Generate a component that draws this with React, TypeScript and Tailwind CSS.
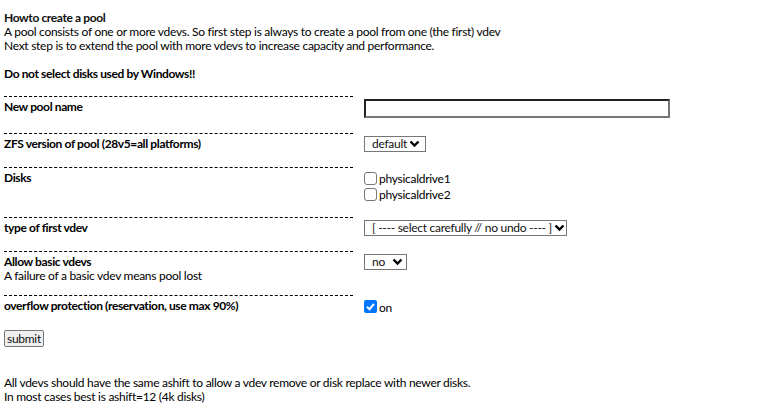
import React from "react";

function Chevron() {
  return (
    <svg width="11" height="8" viewBox="0 0 11 8" className="shrink-0">
      <path d="M1.5 1.5 L5.5 5.5 L9.5 1.5" fill="none" stroke="#000" strokeWidth="2.4" />
    </svg>
  );
}

function FakeSelect({ label, width, pr }: { label: string; width: string; pr: string }) {
  return (
    <div className={`flex h-[16px] items-center border border-[#767676] bg-white pl-[7px] ${pr} ${width}`}>
      <span className="whitespace-nowrap leading-[14px] text-[#111]">{label}</span>
      <span className="ml-auto">
        <Chevron />
      </span>
    </div>
  );
}

function Box({ checked, label }: { checked?: boolean; label: string }) {
  return (
    <label className="flex h-[16.5px] items-center">
      {checked ? (
        <span className="flex h-[13px] w-[13px] items-center justify-center rounded-[2px] bg-[#0075ff]">
          <svg width="11" height="11" viewBox="0 0 11 11">
            <path d="M2 5.8 L4.5 8.2 L9 2.8" fill="none" stroke="#fff" strokeWidth="2" />
          </svg>
        </span>
      ) : (
        <span className="h-[13px] w-[13px] rounded-[3px] border border-[#767676] bg-white" />
      )}
      <span className={`ml-[2px] leading-[14px] ${checked ? "mt-[4px]" : "mt-[1px]"}`}>{label}</span>
    </label>
  );
}

function Row({
  height,
  left,
  right,
}: {
  height: string;
  left: React.ReactNode;
  right: React.ReactNode;
}) {
  return (
    <div className={`flex ${height}`}>
      <div className="w-[349px] shrink-0 border-t border-dashed border-black pt-[3px]">{left}</div>
      <div className="ml-[11px] pt-[3px]">{right}</div>
    </div>
  );
}

export default function App() {
  return (
    <div className="min-h-screen bg-white pl-[4px] pt-[11px] font-['Lato',sans-serif] text-[12px] leading-[14px] tracking-[-0.28px] text-black">
      {/* Intro */}
      <p className="font-bold tracking-[-0.38px] text-[#111]">Howto create a pool</p>
      <p>A pool consists of one or more vdevs. So first step is always to create a pool from one (the first) vdev</p>
      <p>Next step is to extend the pool with more vdevs to increase capacity and performance.</p>
      <p className="mt-[14px] font-bold tracking-[-0.38px]">Do not select disks used by Windows!!</p>

      {/* Form */}
      <div className="mt-[15px]">
        <Row
          height="h-[37px]"
          left={<p className="font-bold tracking-[-0.38px]">New pool name</p>}
          right={
            <input
              type="text"
              className="h-[19px] w-[306px] border-2 border-t-[#222] border-l-[#222] border-b-[#777] border-r-[#777] bg-white outline-none"
            />
          }
        />
        <Row
          height="h-[34px]"
          left={<p className="font-bold tracking-[-0.38px]">ZFS version of pool (28v5=all platforms)</p>}
          right={<FakeSelect label="default" width="w-[62px]" pr="pr-[5px]" />}
        />
        <Row
          height="h-[50px]"
          left={<p className="font-bold tracking-[-0.38px]">Disks</p>}
          right={
            <div className="flex flex-col">
              <Box label="physicaldrive1" />
              <Box label="physicaldrive2" />
            </div>
          }
        />
        <Row
          height="h-[34px]"
          left={<p className="font-bold tracking-[-0.38px]">type of first vdev</p>}
          right={
            <FakeSelect label="[ ---- select carefully // no undo ---- ]" width="w-[203px]" pr="pr-[1px]" />
          }
        />
        <Row
          height="h-[44px]"
          left={
            <>
              <p className="font-bold tracking-[-0.38px]">Allow basic vdevs</p>
              <p>A failure of a basic vdev means pool lost</p>
            </>
          }
          right={<FakeSelect label="no" width="w-[43px]" pr="pr-[3px]" />}
        />
        <Row
          height="h-[35px]"
          left={<p className="font-bold tracking-[-0.38px]">overflow protection (reservation, use max 90%)</p>}
          right={<Box checked label="on" />}
        />
      </div>

      <button className="h-[17px] rounded-[2px] border border-[#767676] bg-[#efefef] px-[2px] leading-[14px] text-[#111]">
        submit
      </button>

      {/* Notes */}
      <div className="mt-[29px]">
        <p>All vdevs should have the same ashift to allow a vdev remove or disk replace with newer disks.</p>
        <p>In most cases best is ashift=12 (4k disks)</p>
      </div>
    </div>
  );
}
